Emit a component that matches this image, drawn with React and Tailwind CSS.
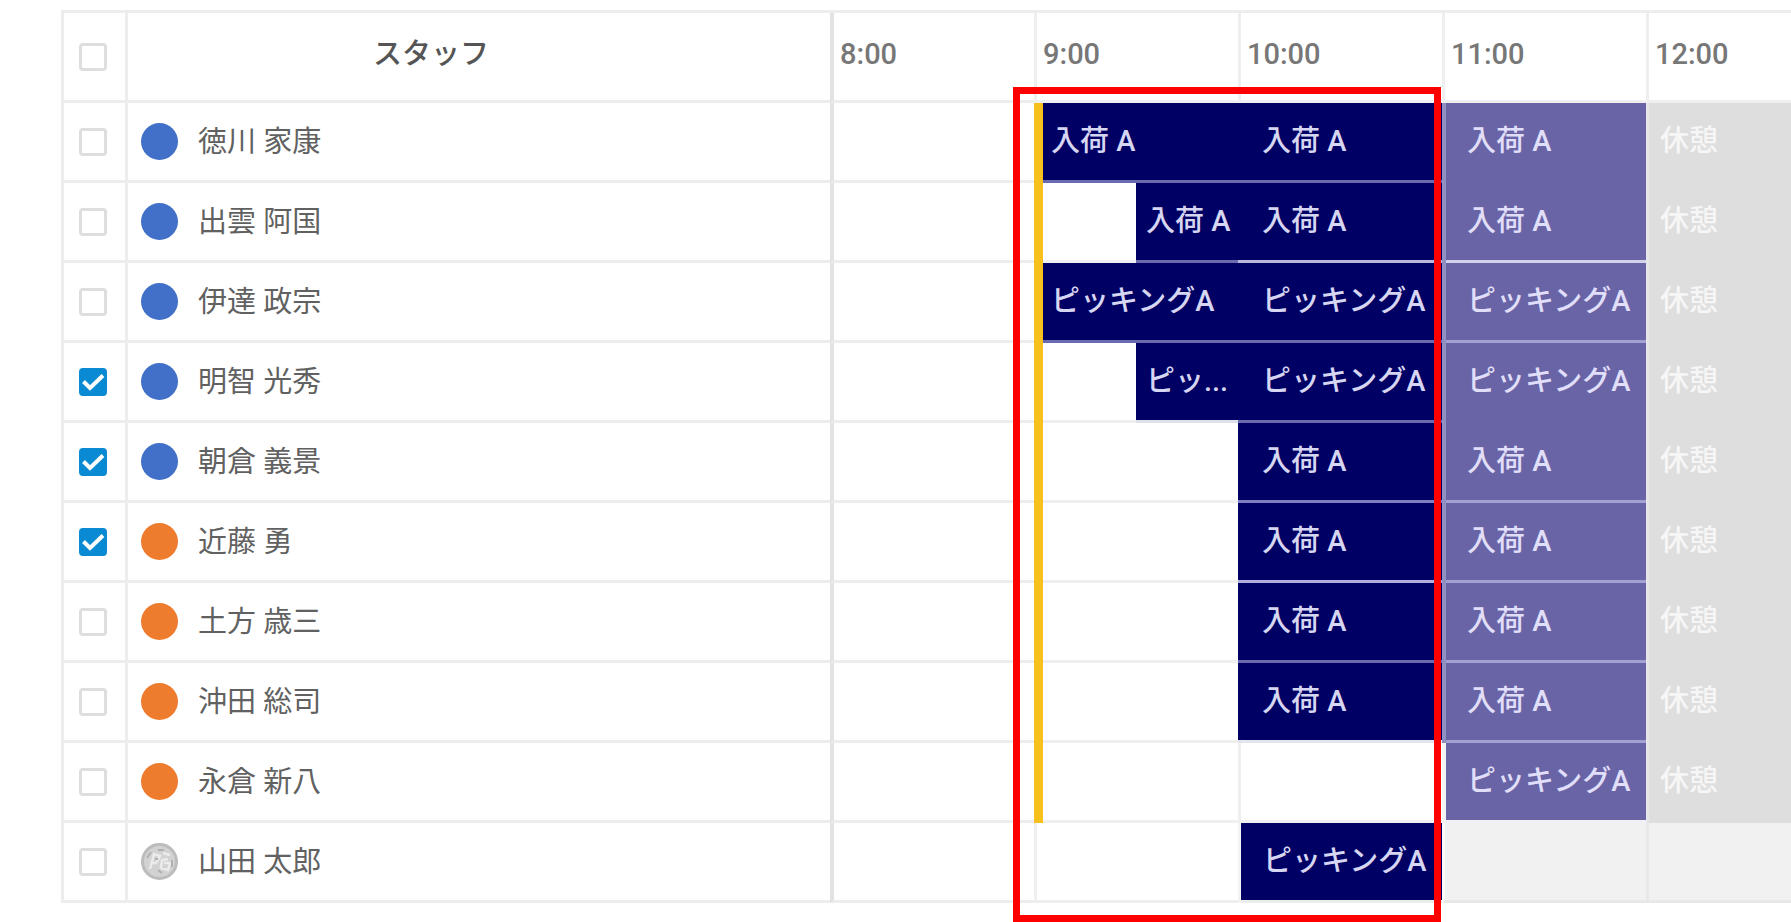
import { useState } from 'react'

const hours = ['8:00', '9:00', '10:00', '11:00', '12:00']

// line = colour of the rule under the bar
const staff = [
  { name: '徳川 家康', team: 'blue', nine: { text: '入荷 A', line: 'border-b-[#6a6ab0]' }, ten: { text: '入荷 A', line: 'border-b-[#6a6ab0]' }, eleven: { text: '入荷 A', line: 'border-b-[#6864a6]' } },
  { name: '出雲 阿国', team: 'blue', nine: { text: '入荷 A', half: true, line: 'border-b-[#6a6ab0]' }, ten: { text: '入荷 A', line: 'border-b-[#b8b8dc]' }, eleven: { text: '入荷 A', line: 'border-b-[#d2d2ea]' } },
  { name: '伊達 政宗', team: 'blue', nine: { text: 'ピッキングA', line: 'border-b-[#6a6ab0]' }, ten: { text: 'ピッキングA', line: 'border-b-[#6a6ab0]' }, eleven: { text: 'ピッキングA', line: 'border-b-[#a3a1d2]' } },
  { name: '明智 光秀', team: 'blue', checked: true, nine: { text: 'ピッ...', half: true, line: 'border-b-[#e0e0ec]' }, ten: { text: 'ピッキングA', line: 'border-b-[#6a6ab0]' }, eleven: { text: 'ピッキングA', line: 'border-b-[#6864a6]' } },
  { name: '朝倉 義景', team: 'blue', checked: true, ten: { text: '入荷 A', line: 'border-b-[#7f7fc4]' }, eleven: { text: '入荷 A', line: 'border-b-[#a3a1d2]' } },
  { name: '近藤 勇', team: 'orange', checked: true, ten: { text: '入荷 A', line: 'border-b-[#b0aee0]' }, eleven: { text: '入荷 A', line: 'border-b-[#a3a1d2]' } },
  { name: '土方 歳三', team: 'orange', ten: { text: '入荷 A', line: 'border-b-[#6a6ab0]' }, eleven: { text: '入荷 A', line: 'border-b-[#a3a1d2]' } },
  { name: '沖田 総司', team: 'orange', ten: { text: '入荷 A', line: 'border-b-[#e4e4f0]' }, eleven: { text: '入荷 A', line: 'border-b-[#a3a1d2]' } },
  { name: '永倉 新八', team: 'orange', eleven: { text: 'ピッキングA', line: 'border-b-[#f0f0f6]' } },
  { name: '山田 太郎', team: 'none', ten: { text: 'ピッキングA', line: 'border-b-[#ececec]' } },
]

const dot = {
  blue: 'bg-[#4270c8]',
  orange: 'bg-[#ee7c2f]',
}

function Check({ label, defaultChecked = false }) {
  const [on, setOn] = useState(defaultChecked)
  return (
    <label className="grid place-items-center">
      <input
        type="checkbox"
        aria-label={label}
        checked={on}
        onChange={e => setOn(e.target.checked)}
        className="col-start-1 row-start-1 size-7 appearance-none rounded border-3 border-[#dedede] bg-white checked:border-[#0a8ad2] checked:bg-[#0a8ad2]"
      />
      {on && (
        <svg className="pointer-events-none col-start-1 row-start-1 size-7" viewBox="0 0 28 28" fill="none" aria-hidden="true">
          <path d="M4.5 13.5L11 20L24 7.5" stroke="#fff" strokeWidth="4" />
        </svg>
      )}
    </label>
  )
}

function Avatar({ team }) {
  if (team !== 'none') return <span className={`size-[37px] shrink-0 rounded-full ${dot[team]}`} />
  return (
    <svg className="size-[37px] shrink-0" viewBox="0 0 37 37" fill="none" aria-hidden="true">
      <circle cx="18.500" cy="18.500" r="17" fill="#d2d2d2" stroke="#bcbcbc" strokeWidth="3" />
      <path d="M9 26L13 11L19 13L15 20L10 20M22 10L29 12M27 16L21 17L20 25L27 27L29 20L23 20" stroke="#ebebeb" strokeWidth="2.500" />
      <path d="M6 15L10 9M17 27L21 30M17 7L23 7M31 17L31 24M14 16L17 16" stroke="#b0b0b0" strokeWidth="2" />
    </svg>
  )
}

function NineCell({ bar, last }) {
  const edge = last ? 'border-l-3 border-l-[#efefef]' : 'border-l-9 border-l-[#f8c01c]'
  return (
    <td className={`p-0 ${edge}`}>
      <div className="flex h-20">
        {(!bar || bar.half) && <div className="flex-1 border-b-3 border-[#efefef]" />}
        {bar && (
          <div className={`border-b-3 bg-[#000064] leading-[77px] font-medium whitespace-nowrap text-[#d6d6f2] ${bar.half ? 'w-[102px] pl-2.5' : 'w-full pl-2'} ${bar.line}`}>
            {bar.text}
          </div>
        )}
      </div>
    </td>
  )
}

function TenCell({ bar, last }) {
  if (!bar) return <td className="border-b-3 border-l-3 border-[#efefef] p-0" />
  return (
    <td className={`p-0 ${last ? 'border-l-3 border-l-[#f3f3f3]' : ''}`}>
      <div className={`h-20 border-b-3 bg-[#000064] leading-[77px] font-medium whitespace-nowrap text-[#d6d6f2] ${last ? 'pl-[22px]' : 'pl-6'} ${bar.line}`}>
        {bar.text}
      </div>
    </td>
  )
}

function ElevenCell({ bar, joined }) {
  if (!bar) return <td className="border-b-3 border-l-3 border-b-[#e8e8e8] border-l-[#fafafa] bg-[#f1f1f1] p-0" />
  return (
    <td className={`border-l-4 p-0 ${joined ? 'border-l-[#9090c2]' : 'border-l-[#f3f3f3]'}`}>
      <div className={`h-20 border-b-3 bg-[#6864a6] pl-[21px] leading-[77px] font-medium whitespace-nowrap text-[#e0def8] ${bar.line}`}>{bar.text}</div>
    </td>
  )
}

export default function App() {
  return (
    <div className="relative overflow-hidden bg-white pt-[10px] pb-[19px] pl-[61px] font-['Roboto','Noto_Sans_CJK_JP',sans-serif] text-[29px] leading-10">
      <table className="w-full table-fixed border-separate border-spacing-0 border-t-3 border-l-3 border-[#ededed]">
        <colgroup>
          <col className="w-[61px]" />
          <col />
          <col className="w-[204px]" />
          <col className="w-[204px]" />
          <col className="w-[204px]" />
          <col className="w-[204px]" />
          <col className="w-[145px]" />
        </colgroup>
        <thead>
          <tr className="h-[90px]">
            <th className="border-b-3 border-[#ededed] p-0 pr-1"><Check label="全員を選択" /></th>
            <th className="border-b-3 border-l-3 border-[#ededed] p-0 pr-24 pb-1.5 font-medium text-[#555]">スタッフ</th>
            {hours.map((h, i) => (
              <th key={h} className={`border-b-3 p-0 pb-1.5 pl-1.5 text-left font-medium text-[#777] ${i === 0 ? 'border-l-4 border-b-[#ededed] border-l-[#e2e2e2]' : 'border-l-3 border-[#efefef]'}`}>
                {h}
              </th>
            ))}
          </tr>
        </thead>
        <tbody>
          {staff.map(({ name, team, checked, nine, ten, eleven }) => {
            const last = team === 'none'
            return (
              <tr key={name} className="h-20">
                <td className="border-b-3 border-[#ededed] p-0 pr-1"><Check label={name} defaultChecked={checked} /></td>
                <td className="border-b-3 border-l-3 border-[#ededed] p-0 pl-[13px]">
                  <div className="flex items-center gap-5 text-[#616161]">
                    <Avatar team={team} />
                    <span className="truncate">{name}</span>
                  </div>
                </td>
                <td className="border-b-3 border-l-4 border-b-[#ededed] border-l-[#e2e2e2] p-0" />
                <NineCell bar={nine} last={last} />
                <TenCell bar={ten} last={last} />
                <ElevenCell bar={eleven} joined={!!ten} />
                {last ? (
                  <td className="border-b-3 border-l-3 border-[#e8e8e8] bg-[#f1f1f1] p-0" />
                ) : (
                  <td className="border-l-3 border-[#e4e6ea] bg-[#dedede] p-0 pb-1 pl-[11px] font-medium text-[#f6f6f6]">休憩</td>
                )}
              </tr>
            )
          })}
        </tbody>
      </table>
      {/* highlighted time range */}
      <div className="pointer-events-none absolute top-[87px] right-[350px] bottom-0 w-[428px] border-7 border-[#ff0000]" />
    </div>
  )
}
